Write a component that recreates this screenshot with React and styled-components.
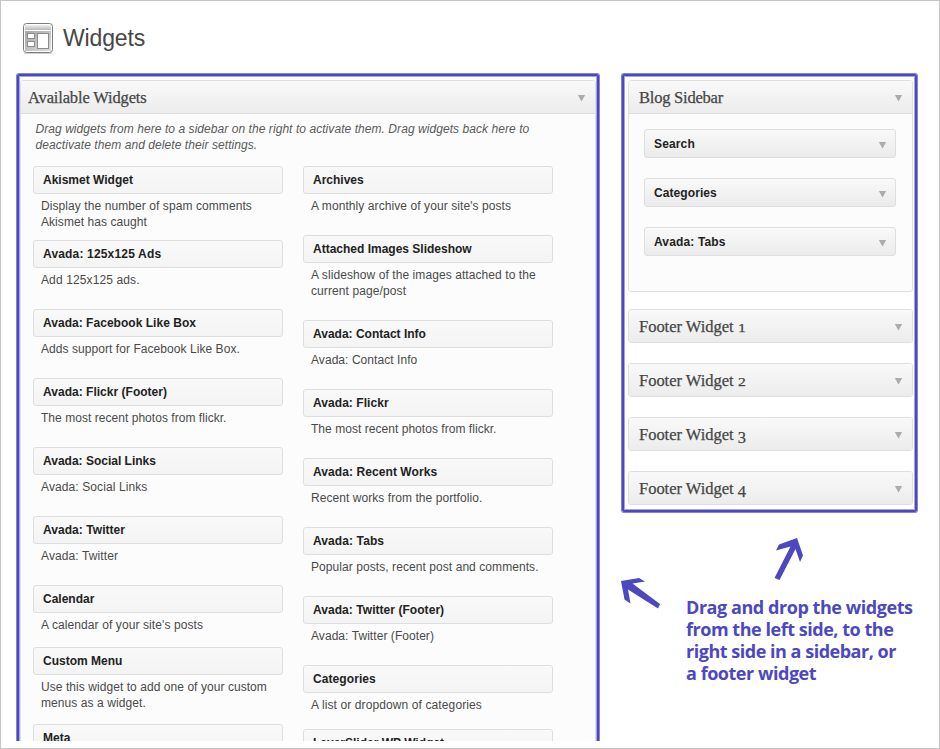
import React from "react";
import styled, { createGlobalStyle } from "styled-components";

const INDIGO = "#4c48bf";

const GlobalStyle = createGlobalStyle`
  *, *::before, *::after { box-sizing: border-box; }
  html, body { margin: 0; padding: 0; background: #fff; overflow: hidden; }
  body { font: 12px/16px "Liberation Sans", Arial, sans-serif; color: #4a4a4a; }
  h1, h2, h3, p { margin: 0; font-weight: normal; }
`;

const Page = styled.div`
  position: relative;
  width: 940px;
  height: 749px;
  border: 1px solid #c6c6c6;
  background: #fff;
  overflow: hidden;
`;

const PageHeader = styled.header`
  display: flex;
  align-items: flex-start;
  gap: 9px;
  height: 72px;
  padding: 21px 0 0 21px;
`;

const PageTitle = styled.h1`
  margin-top: 1px;
  font-size: 23px;
  line-height: 30px;
  color: #464646;
  letter-spacing: -0.15px;
  white-space: nowrap;
`;

const Columns = styled.main`
  display: flex;
  align-items: flex-start;
  gap: 23px;
  height: 668px;
  padding: 1px 0 0 16px;
  overflow: hidden;
`;

const Frame = styled.section`
  width: ${(p) => p.$width}px;
  height: ${(p) => p.$height}px;
  flex: none;
  border: 2px solid ${INDIGO};
  border-radius: 2px;
  box-shadow: 0 0 0 1px #8583d5, inset 0 0 0 1px #a6a4e1;
  padding: ${(p) => p.$pad};
`;

const Panel = styled.div`
  border: 1px solid #dfdfdf;
  border-radius: 3px;
  background: #fcfcfc;
  height: ${(p) => p.$height}px;
  margin-bottom: ${(p) => p.$gap || 0}px;
`;

const PanelHeader = styled.div`
  display: flex;
  align-items: center;
  justify-content: space-between;
  height: ${(p) => (p.$closed ? 32 : 33)}px;
  padding: 2px 10px 0 ${(p) => p.$left || 10}px;
  border-bottom: ${(p) => (p.$closed ? "0" : "1px solid #dfdfdf")};
  border-radius: ${(p) => (p.$closed ? "2px" : "2px 2px 0 0")};
  background: linear-gradient(#f9f9f9, #ececec);
`;

const PanelTitle = styled.h2`
  font: 16.5px/20px "Liberation Serif", Georgia, serif;
  letter-spacing: ${(p) => p.$ls || -0.15}px;
  color: #464646;
  -webkit-text-stroke: 0.25px #464646;
  white-space: nowrap;
`;

/* Text figures: 1 and 2 sit at x-height, 3 and 4 hang below the baseline. */
const Figure = styled.span`
  font-size: ${(p) => (p.$hanging ? 16.5 : 13)}px;
  display: inline-block;
  line-height: 0;
  transform: ${(p) => (p.$hanging ? "translateY(3px)" : "scaleX(1.2)")};
  transform-origin: left;
`;

const Hint = styled.p`
  padding: 7px 0 0 14.5px;
  height: 52px;
  font-style: italic;
  color: #5a5a5a;
  white-space: nowrap;
`;

const TextLine = styled.span`
  display: block;
  letter-spacing: ${(p) => p.$ls || 0}px;
`;

const WidgetGrid = styled.div`
  display: grid;
  grid-template-columns: 250px 250px;
  column-gap: 20px;
  padding-left: 12px;
`;

const WidgetColumn = styled.div`
  display: flex;
  flex-direction: column;
`;

const WidgetItem = styled.article`
  height: ${(p) => p.$height}px;
`;

const WidgetBar = styled.div`
  display: flex;
  align-items: center;
  justify-content: space-between;
  height: ${(p) => (p.$placed ? 29 : 28)}px;
  padding: 0 9px;
  border: 1px solid #dedede;
  border-radius: 3px;
  background: ${(p) =>
    p.$placed ? "linear-gradient(#f9f9f9, #ebebeb)" : "linear-gradient(#f9f9f9, #f4f4f4)"};
`;

const WidgetName = styled.h3`
  font-size: 12px;
  line-height: 16px;
  font-weight: bold;
  color: #222;
  letter-spacing: ${(p) => p.$ls || 0}px;
  white-space: nowrap;
`;

const WidgetText = styled.p`
  padding: 4px 0 0 8px;
  white-space: nowrap;
`;

const Placed = styled.div`
  display: flex;
  flex-direction: column;
  gap: 20px;
  padding: 15px 16px 0 15px;
`;

const Arrow = styled.i`
  width: 8px;
  height: 7px;
  margin-right: -0.5px;
  margin-top: ${(p) => p.$drop || 0}px;
  background: #acacac;
  clip-path: polygon(0 0, 100% 0, 50% 100%);
`;

const Note = styled.p`
  position: absolute;
  left: 685px;
  top: 595px;
  font: bold 18px/22px "Open Sans", "Noto Sans", sans-serif;
  color: ${INDIGO};
  white-space: nowrap;
`;

const Pointers = styled.svg`
  position: absolute;
  left: 609px;
  top: 529px;
`;

/* [row height, name, name tracking, ...[description line, tracking]] */
const left = [
  [74, "Akismet Widget", 0, ["Display the number of spam comments", 0.08], ["Akismet has caught", 0.06]],
  [69, "Avada: 125x125 Ads", 0.17, ["Add 125x125 ads.", 0.12]],
  [69, "Avada: Facebook Like Box", 0.03, ["Adds support for Facebook Like Box.", 0.06]],
  [69, "Avada: Flickr (Footer)", 0.02, ["The most recent photos from flickr.", 0.04]],
  [69, "Avada: Social Links", 0, ["Avada: Social Links", 0.1]],
  [69, "Avada: Twitter", 0.05, ["Avada: Twitter", 0.1]],
  [62, "Calendar", 0, ["A calendar of your site's posts", 0.1]],
  [77, "Custom Menu", 0, ["Use this widget to add one of your custom", 0.06], ["menus as a widget.", 0.08]],
  [28, "Meta", 0],
];

const right = [
  [69, "Archives", 0, ["A monthly archive of your site's posts", 0.08]],
  [85, "Attached Images Slideshow", 0, ["A slideshow of the images attached to the", 0.08], ["current page/post", 0.1]],
  [69, "Avada: Contact Info", 0, ["Avada: Contact Info", 0.06]],
  [69, "Avada: Flickr", 0.06, ["The most recent photos from flickr.", 0.04]],
  [69, "Avada: Recent Works", 0.08, ["Recent works from the portfolio.", 0.06]],
  [69, "Avada: Tabs", 0.1, ["Popular posts, recent post and comments.", 0.07]],
  [69, "Avada: Twitter (Footer)", 0.05, ["Avada: Twitter (Footer)", 0.06]],
  [64, "Categories", 0.08, ["A list or dropdown of categories", 0.11]],
  [28, "LayerSlider WP Widget", 0],
];

const placed = [
  ["Search", 0.14],
  ["Categories", 0.08],
  ["Avada: Tabs", 0.15],
];

function WidgetList({ items }) {
  return (
    <WidgetColumn>
      {items.map(([height, name, ls, ...lines]) => (
        <WidgetItem key={name} $height={height}>
          <WidgetBar>
            <WidgetName $ls={ls}>{name}</WidgetName>
          </WidgetBar>
          <WidgetText>
            {lines.map(([text, spacing]) => (
              <TextLine key={text} $ls={spacing}>{text}</TextLine>
            ))}
          </WidgetText>
        </WidgetItem>
      ))}
    </WidgetColumn>
  );
}

function WidgetsIcon() {
  return (
    <svg width="32" height="34" viewBox="0 0 32 34">
      <defs>
        <linearGradient id="bar" x1="0" y1="0" x2="0" y2="1">
          <stop offset="0" stopColor="#f0f0f0" />
          <stop offset="1" stopColor="#b8b8b8" />
        </linearGradient>
        <linearGradient id="fill" x1="0" y1="0" x2="1" y2="1">
          <stop offset="0" stopColor="#a6a6a6" />
          <stop offset="1" stopColor="#dedede" />
        </linearGradient>
      </defs>
      <rect x="2" y="30.5" width="28" height="1.5" rx="0.7" fill="#d2d2d2" />
      <rect x="1.5" y="1.5" width="29" height="29" rx="3" fill="#fff" stroke="#7c7c7c" />
      <rect x="3" y="3" width="26" height="5" fill="url(#bar)" />
      <rect x="3" y="9" width="26" height="20" fill="url(#fill)" />
      <rect x="5.5" y="11.5" width="7" height="5" fill="#fff" stroke="#8c8c8c" />
      <rect x="5.5" y="19.5" width="7" height="5" fill="#fff" stroke="#8c8c8c" />
      <rect x="15.5" y="11.5" width="11" height="15" fill="#fff" stroke="#8c8c8c" />
    </svg>
  );
}

export default function App() {
  return (
    <>
      <GlobalStyle />
      <Page>
        <PageHeader>
          <WidgetsIcon />
          <PageTitle>Widgets</PageTitle>
        </PageHeader>
        <Columns>
          <Frame $width={582} $height={720} $pad="4px 1px 0 1px">
            <Panel $height={720}>
              <PanelHeader $left={7}>
                <PanelTitle>Available Widgets</PanelTitle>
                <Arrow />
              </PanelHeader>
              <Hint>
                <TextLine $ls={0.06}>
                  Drag widgets from here to a sidebar on the right to activate them. Drag widgets back here to
                </TextLine>
                <TextLine $ls={0.07}>deactivate them and delete their settings.</TextLine>
              </Hint>
              <WidgetGrid>
                <WidgetList items={left} />
                <WidgetList items={right} />
              </WidgetGrid>
            </Panel>
          </Frame>
          <Frame $width={295} $height={438} $pad="4px 2px 0 4px">
            <Panel $height={212} $gap={17}>
              <PanelHeader>
                <PanelTitle $ls={-0.22}>Blog Sidebar</PanelTitle>
                <Arrow />
              </PanelHeader>
              <Placed>
                {placed.map(([name, ls]) => (
                  <WidgetBar key={name} $placed>
                    <WidgetName $ls={ls}>{name}</WidgetName>
                    <Arrow $drop={3} />
                  </WidgetBar>
                ))}
              </Placed>
            </Panel>
            {[1, 2, 3, 4].map((n) => (
              <Panel key={n} $height={34} $gap={20}>
                <PanelHeader $closed>
                  <PanelTitle $ls={-0.02}>
                    Footer Widget <Figure $hanging={n > 2}>{n}</Figure>
                  </PanelTitle>
                  <Arrow />
                </PanelHeader>
              </Panel>
            ))}
          </Frame>
        </Columns>
        <Pointers width="200" height="90" viewBox="610 530 200 90" fill={INDIGO}>
          <path d="M621 581L639 578L645 581.5L632.5 583.5L660 604L658 608.5L628 589.5L630.5 603.5L624.5 599.5Z" />
          <path d="M797 538L803 555.5L800 562L795.5 549L779.5 580L774.5 578L790.5 546.5L776 550.5L779 544.5Z" />
        </Pointers>
        <Note>
          <TextLine $ls={-0.44}>Drag and drop the widgets</TextLine>
          <TextLine $ls={-0.46}>from the left side, to the</TextLine>
          <TextLine $ls={-0.48}>right side in a sidebar, or</TextLine>
          <TextLine $ls={-0.46}>a footer widget</TextLine>
        </Note>
      </Page>
    </>
  );
}
